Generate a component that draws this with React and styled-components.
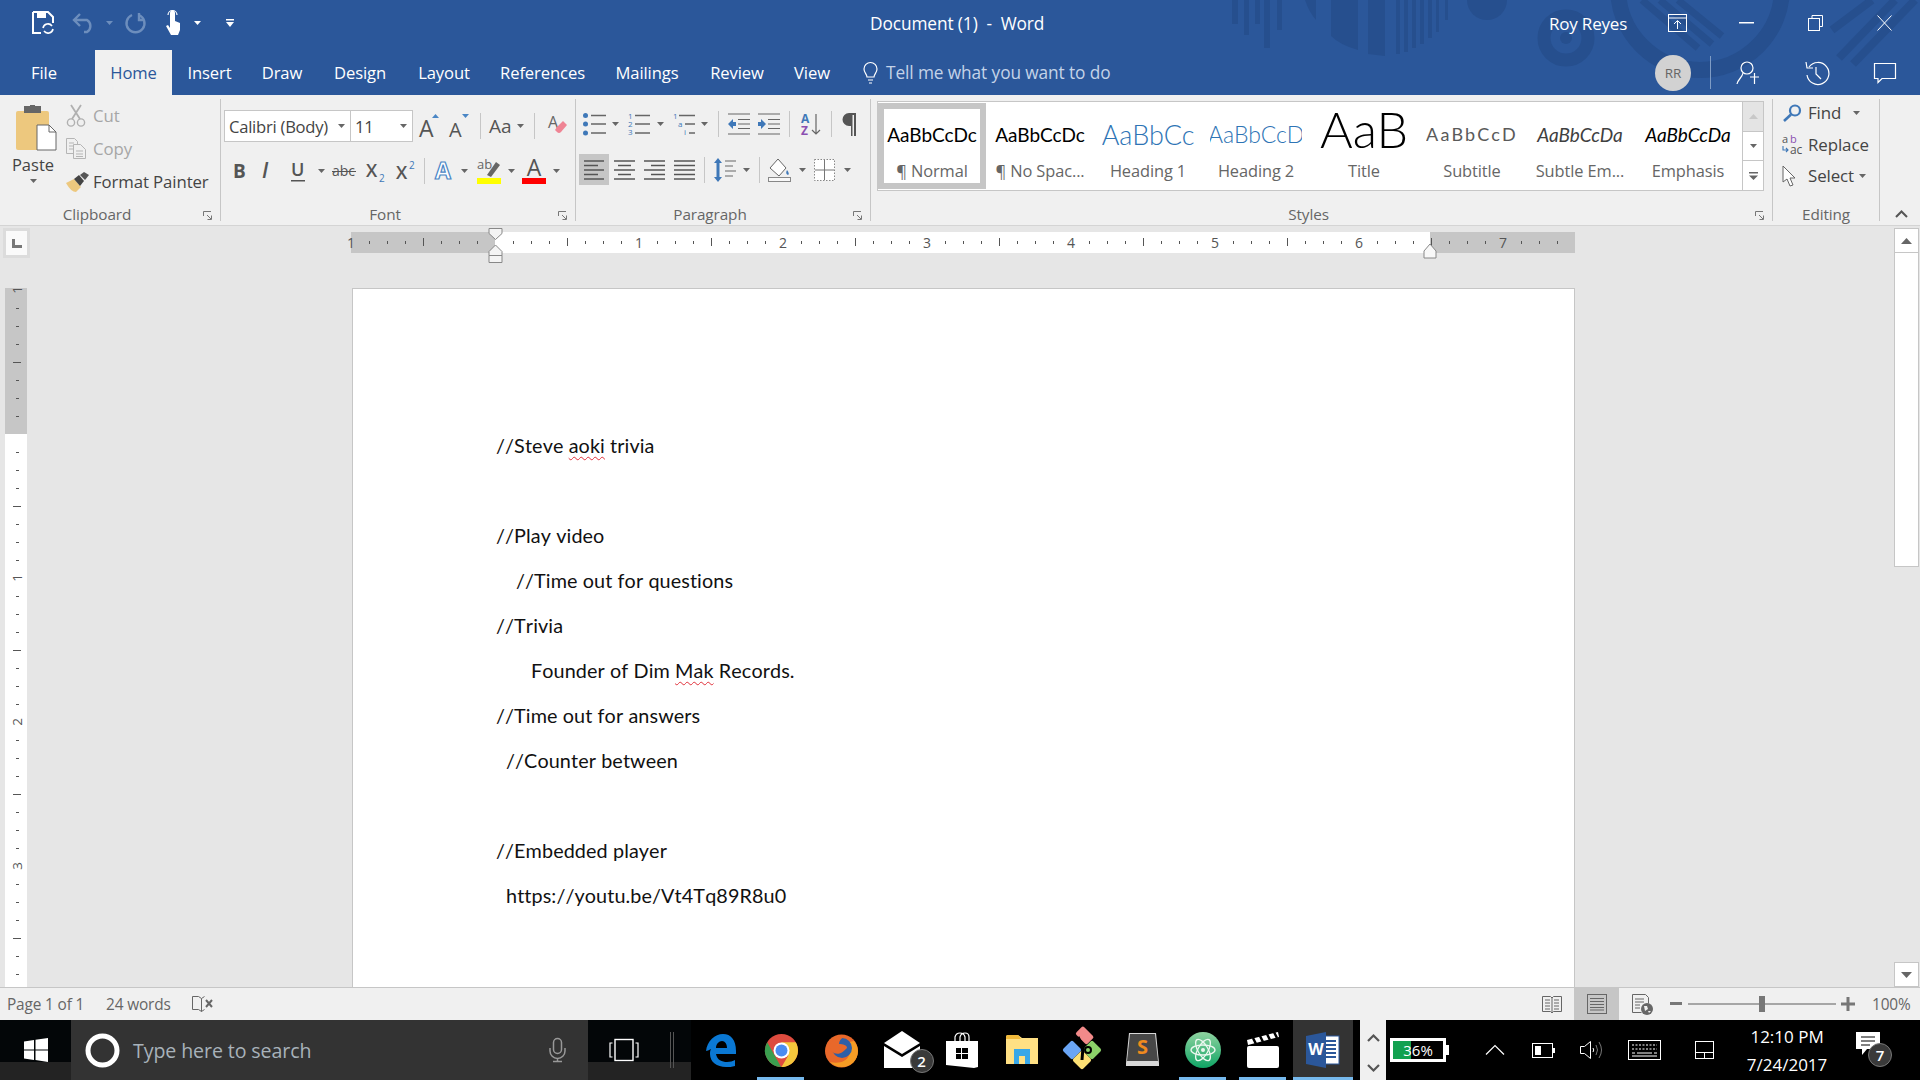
import React from "react";
import styled, { createGlobalStyle } from "styled-components";

const UI_FONT = `"Open Sans", "Noto Sans", sans-serif`;
const DOC_FONT = `Lato, "Open Sans", sans-serif`;
const BLUE = "#2b579a";
const GRAY = "#c6c6c6";
const ICON = "#5a5a5a";

const GlobalStyle = createGlobalStyle`
  html, body { margin: 0; padding: 0; background: #000; }
  body { font-family: ${UI_FONT}; overflow: hidden; }
`;

// Small svg wrapper, viewBox is always in real pixels so the drawings are easy to tune
const Glyph = styled.svg`
  display: block;
  flex: none;
  overflow: visible;
  margin-left: ${(p) => p.$ml || 0}px;
`;
const G = ({ w, h, ml, children }) => (
  <Glyph width={w} height={h} viewBox={`0 0 ${w} ${h}`} $ml={ml}>
    {children}
  </Glyph>
);
const Caret = ({ ml, color = "#666" }) => (
  <G w={7} h={4} ml={ml}>
    <polygon points="0,0 7,0 3.5,4" fill={color} />
  </G>
);

/* ---------- Header ---------- */
const Window = styled.div`
  width: 1920px;
  height: 1080px;
  display: flex;
  flex-direction: column;
  overflow: hidden;
  background: #e6e6e6;
`;
const Header = styled.header`
  position: relative;
  height: 95px;
  flex: none;
  background: ${BLUE};
  color: #fff;
`;
const Art = styled.svg`
  position: absolute;
  left: 0;
  top: 0;
`;
const TitleRow = styled.div`
  position: relative;
  display: flex;
  align-items: center;
  height: 46px;
  padding-right: 28px;
`;
const Qat = styled.div`
  display: flex;
  align-items: center;
  width: 870px;
  padding-left: 32px;
  box-sizing: border-box;
  flex: none;
`;
const DocTitle = styled.div`
  font-size: 17.3px;
  white-space: pre;
  letter-spacing: -0.1px;
  color: #fff;
`;
const UserName = styled.div`
  margin-left: auto;
  width: 79px;
  font-size: 17px;
  letter-spacing: -0.2px;
  white-space: nowrap;
`;
const TabRow = styled.nav`
  position: relative;
  display: flex;
  height: 45px;
  margin-top: 4px;
  padding-right: 24px;
`;
const Tab = styled.div`
  width: ${(p) => p.$w}px;
  margin-right: ${(p) => p.$mr || 0}px;
  display: flex;
  align-items: center;
  justify-content: center;
  font-size: 16.6px;
  letter-spacing: -0.1px;
  background: ${(p) => (p.$active ? "#f0f0f0" : "transparent")};
  color: ${(p) => (p.$active ? BLUE : "#fff")};
`;
const TellMe = styled.div`
  display: flex;
  align-items: center;
  margin-left: 18px;
  gap: 6px;
  font-size: 17.3px;
  letter-spacing: -0.1px;
  color: #c4d3e8;
`;
const UserTools = styled.div`
  margin-left: auto;
  display: flex;
  align-items: center;
`;
const Avatar = styled.div`
  width: 36px;
  height: 36px;
  border-radius: 50%;
  background: #d2d2d2;
  color: #666;
  font-size: 13.5px;
  display: flex;
  align-items: center;
  justify-content: center;
`;
const HeaderRule = styled.div`
  width: 1px;
  height: 33px;
  margin-left: 19px;
  background: #7f9cc5;
`;

/* ---------- Ribbon ---------- */
const Ribbon = styled.section`
  display: flex;
  flex: none;
  height: 130px;
  background: #f0f0f0;
  border-bottom: 1px solid #d4d4d4;
`;
const Group = styled.div`
  position: relative;
  width: ${(p) => p.$w}px;
  height: 122px;
  margin-top: 4px;
  flex: none;
  box-sizing: border-box;
  border-right: 1px solid ${GRAY};
`;
const GroupBody = styled.div`
  height: 104px;
  display: flex;
  flex-direction: ${(p) => (p.$row ? "row" : "column")};
`;
const GroupLabel = styled.div`
  height: 22px;
  line-height: 22px;
  text-align: center;
  font-size: 15.3px;
  letter-spacing: -0.1px;
  color: #666;
  padding-right: ${(p) => p.$pr || 0}px;
`;
const Launcher = styled.div`
  position: absolute;
  right: 8px;
  bottom: 1px;
`;
const LauncherIcon = () => (
  <Launcher>
    <G w={9} h={9}>
      <path d="M.5 5V.5H8M4 4l4 4M8.5 4.5v4H4.5" stroke="#777" fill="none" />
    </G>
  </Launcher>
);
const PasteButton = styled.div`
  width: 66px;
  flex: none;
  display: flex;
  flex-direction: column;
  align-items: center;
  padding-top: 6px;
  font-size: 16.5px;
  color: #444;
  gap: 3px;
`;
const PasteArt = styled.span`
  margin-left: 6px;
`;
const ClipList = styled.div`
  display: flex;
  flex-direction: column;
`;
const ClipRow = styled.div`
  height: 33px;
  display: flex;
  align-items: center;
  font-size: 16.8px;
  letter-spacing: -0.1px;
  color: ${(p) => (p.$disabled ? "#a6a6a6" : "#444")};
`;
const ClipIcon = styled.span`
  width: 27px;
  flex: none;
`;
const ToolRow = styled.div`
  height: ${(p) => p.$h}px;
  flex: none;
  display: flex;
  align-items: center;
  padding-left: ${(p) => p.$pl}px;
  margin-top: ${(p) => p.$mt}px;
`;
const Divider = styled.div`
  flex: none;
  width: 1px;
  height: 26px;
  margin-left: ${(p) => p.$ml}px;
  background: ${GRAY};
`;
const Combo = styled.div`
  display: flex;
  width: 189px;
  height: 32px;
  flex: none;
  box-sizing: border-box;
  background: #fff;
  border: 1px solid ${GRAY};
`;
const ComboField = styled.div`
  width: ${(p) => p.$w}px;
  box-sizing: border-box;
  display: flex;
  align-items: center;
  justify-content: space-between;
  padding: 0 5px 0 4px;
  font-size: 16.6px;
  letter-spacing: -0.25px;
  color: #444;
  border-right: ${(p) => (p.$divided ? `1px solid ${GRAY}` : "none")};
  white-space: nowrap;
`;
const ActiveTool = styled.div`
  width: 30px;
  height: 31px;
  flex: none;
  display: flex;
  align-items: center;
  justify-content: center;
  background: ${GRAY};
`;
const Gallery = styled.div`
  display: flex;
  margin: 2px 0 0 6px;
  height: 90px;
  box-sizing: border-box;
  border: 1px solid ${GRAY};
  background: #fff;
`;
const StyleCard = styled.div`
  width: 108px;
  height: 86px;
  margin-top: 1px;
  flex: none;
  box-sizing: border-box;
  border: 6px solid ${(p) => (p.$selected ? GRAY : "transparent")};
  display: flex;
  flex-direction: column;
  align-items: center;
`;
const StyleSample = styled.div`
  width: 92px;
  height: 50px;
  flex: none;
  box-sizing: border-box;
  padding-bottom: ${(p) => p.$lift || 0}px;
  overflow: hidden;
  display: flex;
  align-items: center;
  justify-content: center;
  white-space: nowrap;
  font-family: ${DOC_FONT};
  font-size: ${(p) => p.$size}px;
  font-weight: ${(p) => p.$weight || 400};
  font-style: ${(p) => (p.$italic ? "italic" : "normal")};
  letter-spacing: ${(p) => p.$track || 0}px;
  color: ${(p) => p.$color || "#000"};
`;
const StyleName = styled.div`
  font-size: 16.4px;
  letter-spacing: -0.1px;
  color: #666;
  line-height: 24px;
  white-space: nowrap;
`;
const GalleryArrows = styled.div`
  width: 22px;
  flex: none;
  display: flex;
  flex-direction: column;
  margin: 2px 0 0 -1px;
  height: 90px;
  box-sizing: border-box;
`;
const GalleryArrow = styled.div`
  flex: 1;
  display: flex;
  align-items: center;
  justify-content: center;
  box-sizing: border-box;
  background: ${(p) => (p.$disabled ? "#e4e4e4" : "#fff")};
  border: 1px solid ${GRAY};
  border-top-width: ${(p) => (p.$first ? 1 : 0)}px;
`;
const EditRow = styled.div`
  height: 31.5px;
  display: flex;
  align-items: center;
  padding-left: 9px;
  font-size: 16.9px;
  letter-spacing: -0.1px;
  color: #444;
`;
const EditIcon = styled.span`
  width: 26px;
  flex: none;
`;
const EditList = styled.div`
  margin-top: -2px;
`;
const Collapse = styled.div`
  align-self: flex-end;
  margin: 0 0 7px 15px;
`;

/* ---------- Workspace ---------- */
const Workspace = styled.main`
  flex: 1;
  min-height: 0;
  display: flex;
  background: #e6e6e6;
`;
const DocArea = styled.div`
  width: 1894px;
  flex: none;
  display: flex;
  flex-direction: column;
`;
const RulerRow = styled.div`
  height: 62px;
  flex: none;
  box-sizing: border-box;
  padding-top: 2px;
  display: flex;
  align-items: flex-start;
`;
const TabStop = styled.div`
  width: 27px;
  height: 30px;
  margin: 0 321px 0 3px;
  flex: none;
  background: #fafafa;
  border: 3px solid #dcdcdc;
  box-sizing: border-box;
  display: flex;
  align-items: center;
  justify-content: center;
`;
const PageRow = styled.div`
  flex: 1;
  min-height: 0;
  display: flex;
  align-items: flex-start;
`;
const Page = styled.article`
  width: 1223px;
  height: 700px;
  margin-left: 325px;
  flex: none;
  box-sizing: border-box;
  background: #fff;
  border: 1px solid ${GRAY};
  border-bottom: none;
  padding: 134px 0 0 143px;
  font-family: ${DOC_FONT};
  font-size: 19.8px;
  letter-spacing: 0.1px;
  font-kerning: none;
  color: #111;
  overflow: hidden;
`;
const Line = styled.p`
  margin: 0;
  height: 45px;
  line-height: 45px;
  padding-left: ${(p) => p.$indent || 0}px;
  white-space: pre;
`;
const Typo = styled.span`
  text-decoration: underline wavy #e0303a 1px;
  text-underline-offset: 3px;
`;
const ScrollBar = styled.aside`
  width: 25px;
  flex: none;
  display: flex;
  flex-direction: column;
  padding-top: 2px;
`;
const ScrollButton = styled.div`
  height: 25px;
  flex: none;
  background: #fff;
  border: 1px solid ${GRAY};
  box-sizing: border-box;
  display: flex;
  align-items: center;
  justify-content: center;
`;
const ScrollThumb = styled.div`
  height: 314px;
  flex: none;
  background: #fff;
  border: 1px solid ${GRAY};
  border-top: none;
  box-sizing: border-box;
`;
const ScrollTrack = styled.div`
  flex: 1;
`;

/* ---------- Status bar ---------- */
const StatusBar = styled.footer`
  height: 33px;
  flex: none;
  box-sizing: border-box;
  display: flex;
  align-items: center;
  background: #f0f0f0;
  border-top: 1px solid ${GRAY};
  font-size: 15.4px;
  letter-spacing: -0.15px;
  color: #666;
`;
const StatusText = styled.span`
  margin-left: ${(p) => p.$ml}px;
  width: ${(p) => p.$w}px;
  white-space: nowrap;
  flex: none;
`;
const ViewButton = styled.div`
  width: 45px;
  height: 32px;
  margin-left: ${(p) => p.$ml || 0}px;
  flex: none;
  display: flex;
  align-items: center;
  justify-content: center;
  background: ${(p) => (p.$active ? GRAY : "transparent")};
`;

/* ---------- Taskbar ---------- */
const Taskbar = styled.div`
  height: 60px;
  flex: none;
  display: flex;
  background: #000;
  color: #fff;
`;
const DimSegment = styled.div`
  width: ${(p) => p.$w}px;
  flex: none;
  display: flex;
  align-items: center;
  box-sizing: border-box;
  padding-left: ${(p) => p.$pl || 0}px;
  background: linear-gradient(#030608 70%, #232323 70%);
`;
const SearchBox = styled.div`
  width: 517px;
  flex: none;
  box-sizing: border-box;
  background: #333;
  display: flex;
  align-items: center;
  padding-left: 14px;
  font-size: 19.6px;
  letter-spacing: -0.1px;
  color: #a8b2ba;
`;
const SearchText = styled.span`
  margin-left: 13px;
  width: 416px;
`;
const TaskSlot = styled.div`
  position: relative;
  width: 60.2px;
  flex: none;
  display: flex;
  align-items: center;
  justify-content: center;
  background: ${(p) => (p.$active ? "#333" : "transparent")};
  &::after {
    content: "";
    display: ${(p) => (p.$running ? "block" : "none")};
    position: absolute;
    left: ${(p) => (p.$active ? 0 : 6)}px;
    right: ${(p) => (p.$active ? 0 : 7)}px;
    bottom: 0;
    height: 3px;
    background: #76b9ed;
  }
`;
const TaskBadge = styled.div`
  position: absolute;
  left: 38px;
  top: 29px;
  width: 24px;
  height: 24px;
  border-radius: 50%;
  background: #3a3a3a;
  border: 1px solid #777;
  box-sizing: border-box;
  display: flex;
  align-items: center;
  justify-content: center;
  font-size: 15px;
  font-weight: 600;
  color: #fff;
`;
const OverflowStrip = styled.div`
  width: 26px;
  margin-left: 7px;
  flex: none;
  background: #f0f0f0;
  display: flex;
  flex-direction: column;
  align-items: center;
  justify-content: space-between;
  padding: 14px 0 8px;
  box-sizing: border-box;
`;
const Tray = styled.div`
  display: flex;
  flex: 1;
  align-items: center;
  padding-left: 4px;
`;
const BatteryMeter = styled.div`
  position: relative;
  width: 56px;
  height: 24px;
  flex: none;
  box-sizing: border-box;
  border: 3px solid #fff;
  background: #000;
  display: flex;
  align-items: center;
  justify-content: center;
  font-size: 15px;
  color: #fff;
  &::before {
    content: "";
    position: absolute;
    inset: 0 auto 0 0;
    width: 36%;
    background: #12a150;
  }
  &::after {
    content: "";
    position: absolute;
    right: -6px;
    top: 4px;
    width: 3px;
    height: 10px;
    background: #fff;
  }
`;
const BatteryText = styled.span`
  position: relative;
`;
const Clock = styled.div`
  width: 90px;
  margin-left: 28px;
  flex: none;
  display: flex;
  flex-direction: column;
  align-items: center;
  gap: 7px;
  font-size: 17px;
  line-height: 21px;
  white-space: nowrap;
`;
const NotifyArea = styled.div`
  position: relative;
  margin-left: 24px;
  width: 36px;
  height: 36px;
  flex: none;
`;
const NotifyBadge = styled(TaskBadge)`
  left: 12px;
  top: 11px;
`;

/* ---------- Small icon drawings ---------- */
const line = (d, color = ICON, w = 1.3) => <path d={d} stroke={color} strokeWidth={w} fill="none" />;

const lines = (ys, x1, x2) => ys.map((y) => `M${x1} ${y}H${x2}`).join("");
const AlignIcon = ({ ml, kind }) => {
  const rows = [1, 5.5, 10, 14.5, 19];
  const d = rows
    .map((y, i) => {
      const short = i % 2 === 1;
      if (kind === "left") return `M0 ${y}H${short ? 14 : 20}`;
      if (kind === "center") return `M${short ? 4 : 0} ${y}H${short ? 17 : 21}`;
      if (kind === "right") return `M${short ? 7 : 0} ${y}H21`;
      return `M0 ${y}H21`;
    })
    .join("");
  return (
    <G w={21} h={20} ml={ml}>
      {line(d, "#555", 1.4)}
    </G>
  );
};

const HeaderArt = () => (
  <Art width="1920" height="95" viewBox="0 0 1920 95">
    <g fill="#264f8e">
      <rect x="1232" width="6" height="24" />
      <rect x="1244" width="5" height="35" />
      <rect x="1255" width="5" height="24" />
      <rect x="1264" width="6" height="48" />
      <rect x="1277" width="5" height="30" />
      <path d="M1305 0h11v20q-7-8-11-20zM1331 0h27v50q-18-5-27-14zM1368 0h17v56l-17-2z" />
      <path d="M1396 0h4v54h-4zM1404 0h4v52h-4zM1412 0h4v48h-4zM1420 0h4v44h-4zM1428 0h4v38h-4zM1436 0h3v32h-3zM1445 0h3v20h-3z" />
      <circle cx="1487" cy="0" r="20" />
      <circle cx="1566" cy="38" r="6" />
    </g>
    <g fill="none" stroke="#264f8e">
      <circle cx="1566" cy="38" r="22" strokeWidth="13" />
      <circle cx="1700" cy="-12" r="82" strokeWidth="16" />
      <path d="M1642 0l56 48M1660 0l52 44M1678 0l44 36" strokeWidth="7" />
      <path d="M1872 0l-40 30M1895 0l-56 58M1915 0l-62 64" strokeWidth="8" />
    </g>
  </Art>
);

const Paste = () => (
  <G w={41} h={45}>
    <rect x="0" y="6" width="33" height="39" rx="2" fill="#edc87e" />
    <path d="M10 6V3h4V0h5v3h4v3z" fill="#666" />
    <rect x="8" y="1" width="17" height="7" fill="#666" />
    <path d="M21 20h12l7 7v18H21z" fill="#fff" stroke="#666" />
    <path d="M33 20v7h7" fill="none" stroke="#666" />
  </G>
);
const Scissors = () => (
  <G w={20} h={22}>
    {line("M5 0l9 14M15 0L6 14", "#b0b0b0", 1.8)}
    <circle cx="5" cy="17.5" r="3.6" fill="none" stroke="#b0b0b0" strokeWidth="1.4" />
    <circle cx="15" cy="17.5" r="3.6" fill="none" stroke="#b0b0b0" strokeWidth="1.4" />
  </G>
);
const CopyIcon = () => (
  <G w={20} h={21}>
    {line("M.5 .5h8l3 3v12H.5zM3 5h5M3 8h6M3 11h6", "#b5b5b5", 1)}
    <path d="M7.5 6.5h7l5 5v9h-12z" fill="#f0f0f0" stroke="#b5b5b5" />
    {line("M10 13h7M10 16h7M10 18.5h7", "#b5b5b5", 1)}
  </G>
);
const Brush = () => (
  <G w={23} h={20}>
    <path d="M0 11l8-4 7 8-5 5q-5 0-10-9z" fill="#edc87e" />
    <path d="M8 7l5-4 5 6-4 5z" fill="#444" />
    <path d="M14 3l4-3 5 3-4 5z" fill="#555" />
  </G>
);
const GrowA = ({ ml, grow }) => (
  <G w={20} h={24} ml={ml}>
    <text x="0" y="23" fontFamily={UI_FONT} fontSize={grow ? 23 : 20} fill="#555">A</text>
    <polygon points={grow ? "13,4 20,4 16.5,0" : "13,0 20,0 16.5,4"} fill="#4a86c5" />
  </G>
);
const ClearFormat = ({ ml }) => (
  <G w={19} h={24} ml={ml}>
    <text x="0" y="14" fontFamily={UI_FONT} fontSize="16" fill="#666">A</text>
    <path d="M9 13l6-6 4 4-6 7q-2 2-4 0l-2-2z" fill="#ef8494" />
  </G>
);
const Bullets = ({ ml }) => (
  <G w={23} h={22} ml={ml}>
    <g fill="#3f78b8"><circle cx="2.5" cy="2.5" r="2.5" /><circle cx="2.5" cy="11" r="2.5" /><circle cx="2.5" cy="20" r="2.5" /></g>
    {line("M8 2.5h15M8 11h15M8 20h15", "#666", 1.3)}
  </G>
);
const Numbering = ({ ml }) => (
  <G w={22} h={22} ml={ml}>
    <g fontFamily={UI_FONT} fontSize="8" fill="#3f78b8"><text x="0" y="6">1</text><text x="0" y="14">2</text><text x="0" y="22">3</text></g>
    {line("M7 2.5h15M7 11h15M7 20h15", "#666", 1.3)}
  </G>
);
const Multilevel = ({ ml }) => (
  <G w={22} h={22} ml={ml}>
    <g fontFamily={UI_FONT} fontSize="8" fill="#3f78b8"><text x="0" y="6">1</text><text x="5" y="14">a</text><text x="11" y="22">i</text></g>
    {line("M6 2.5h16M12 11h10M16 20h6", "#666", 1.3)}
  </G>
);
const IndentIcon = ({ ml, dir }) => (
  <G w={22} h={22} ml={ml}>
    {line("M0 1h22M10 6.5h12M10 11h12M10 15.5h12M0 21h22", "#666", 1.2)}
    <polygon points={dir ? "8,11 3,6 3,9 0,9 0,13 3,13 3,16" : "0,11 5,6 5,9 8,9 8,13 5,13 5,16"} fill="#3f78b8" />
  </G>
);
const SortIcon = ({ ml }) => (
  <G w={20} h={24} ml={ml}>
    <text x="0" y="11" fontFamily={UI_FONT} fontWeight="700" fontSize="12" fill="#3f78b8">A</text>
    <text x="0" y="23" fontFamily={UI_FONT} fontWeight="700" fontSize="12" fill="#8a4fb0">Z</text>
    {line("M15 2v20M11 18l4 4 4-4", "#666", 1.2)}
  </G>
);
const Pilcrow = ({ ml }) => (
  <G w={16} h={24} ml={ml}>
    <path d="M14 1H7a6 6 0 0 0 0 13h2v10h1.5V3H12v21h2z" fill="#555" />
  </G>
);
const SpacingIcon = ({ ml }) => (
  <G w={22} h={24} ml={ml}>
    <path d="M4 0l4 5H5.5v14H8l-4 5-4-5h2.5V5H0z" fill="#3f78b8" />
    {line("M11 3h11M11 8h8M11 13h11M11 18h8", "#666", 1.2)}
  </G>
);
const Shading = ({ ml }) => (
  <G w={24} h={24} ml={ml}>
    <path d="M10 1l8 9-7 8-9-8z" fill="#fff" stroke="#666" />
    <path d="M19 12q3 4 1 5-3-1-1-5z" fill="#3f78b8" />
    <rect x=".5" y="19.5" width="22" height="4" fill="#f8f8f8" stroke="#888" />
  </G>
);
const Borders = ({ ml }) => (
  <G w={21} h={22} ml={ml}>
    <rect x=".5" y=".5" width="20" height="21" fill="#fff" stroke="#888" strokeDasharray="1.5 1.5" />
    {line("M10.5 1v20M1 11h19", "#777", 1)}
  </G>
);
const Magnifier = () => (
  <G w={20} h={18}>
    <circle cx="13" cy="6.5" r="5" fill="none" stroke="#3f78b8" strokeWidth="2.2" />
    {line("M9 10.5L2 17", "#3f78b8", 2.6)}
  </G>
);
const ReplaceIcon = () => (
  <G w={23} h={20}>
    <text x="0" y="9" fontFamily={UI_FONT} fontSize="11" fill="#555">a</text>
    <text x="8" y="9" fontFamily={UI_FONT} fontSize="11" fill="#8a4fb0">b</text>
    <text x="8" y="20" fontFamily={UI_FONT} fontSize="12" fill="#555">ac</text>
    {line("M1 12v4h5M4 14l2 2-2 2", "#3f78b8", 1.1)}
  </G>
);
const Pointer = () => (
  <G w={14} h={22}>
    <path d="M1 1v16l4-3 3 7 3-1-3-7h5z" fill="#fff" stroke="#666" />
  </G>
);

const EdgeLogo = () => (
  <G w={30} h={33}>
    <path d="M0 17C1 7 9 0 17 0c8 0 13 6 13 17v3H10c1 6 6 8 11 8 3 0 6-1 8-2v6c-3 1-6 1-9 1-9 0-16-5-16-13 0-2 0-3 1-5-2 1-4 2-5 2zM10 14h11c0-4-2-7-5-7-3 0-6 3-6 7z" fill="#0a78d4" />
  </G>
);
const ChromeLogo = () => (
  <G w={33} h={33}>
    <circle cx="16.5" cy="16.5" r="16.5" fill="#dd4b3e" />
    <path d="M16.5 33A16.5 16.5 0 0 1 2.2 8.2L10 22l6 11z" fill="#3a9e4f" />
    <path d="M16.5 33a16.5 16.5 0 0 0 14.3-24.7H16.5L23 22z" fill="#f4c73c" />
    <circle cx="16.5" cy="16.5" r="8" fill="#fff" />
    <circle cx="16.5" cy="16.5" r="6" fill="#4a8cf0" />
  </G>
);
const FirefoxLogo = () => (
  <G w={33} h={35}>
    <circle cx="16.5" cy="18" r="16.5" fill="#e8682a" />
    <path d="M29 8a16 16 0 0 1 4 10c0 9-7 16-16 16-5 0-9-2-12-5 8 2 17 0 19-7 2-6-1-10-4-12z" fill="#f7a224" opacity="0.9" />
    <ellipse cx="17" cy="15" rx="10" ry="10" fill="#2d5fa8" />
    <path d="M5 12c3-6 9-10 15-9-4 2-6 5-6 8 4 0 8 1 8 4-4 4-9 9-16 3-1-2-2-4-1-6z" fill="#e8682a" />
  </G>
);
const MailIcon = () => (
  <G w={36} h={38}>
    <path d="M0 12L18 0l18 12-18 11z" fill="#fff" />
    <path d="M0 15l18 11 18-11v22H0z" fill="#fff" />
  </G>
);
const StoreIcon = () => (
  <G w={32} h={36}>
    <path d="M9 10V5q1-4 5-4t5 4v5M14 10V5q1-4 5-4t4 4v5" fill="none" stroke="#fff" strokeWidth="1.2" />
    <path d="M0 9l32 0v26l-4 1L0 33z" fill="#fff" />
    <path d="M10 16h5v5h-5zM16 16h6v5h-6zM10 22h5v5h-5zM16 22h6v5h-6z" fill="#000" />
  </G>
);
const FolderIcon = () => (
  <G w={32} h={34}>
    <path d="M0 4q0-2 2-2h10l4 3h16v26H0z" fill="#ffe084" />
    <path d="M0 4q0-2 2-2h10l3 4H0z" fill="#f0b93a" />
    <path d="M8 31V16h16v15h-5v-8h-6v8z" fill="#38a7e8" />
  </G>
);
const KrakenIcon = () => (
  <G w={36} h={46}>
    <rect x="13" y="3" width="16" height="11" rx="2" transform="rotate(45 21 8)" fill="#f28a8a" />
    <rect x="1" y="16" width="14" height="14" rx="2" transform="rotate(45 8 23)" fill="#6aa5f5" />
    <rect x="21" y="16" width="14" height="14" rx="2" transform="rotate(45 28 23)" fill="#8bd168" />
    <rect x="11" y="26" width="14" height="14" rx="2" transform="rotate(45 18 33)" fill="#fde074" />
    {line("M14 10l5 10-1 13", "#000", 3)}
    <circle cx="24" cy="23" r="3" fill="none" stroke="#000" strokeWidth="2" />
  </G>
);
const SublimeIcon = () => (
  <G w={33} h={36}>
    <path d="M3 1h27l3 30v3H0v-3z" fill="#d8d8d8" />
    <path d="M4 2h25l3 27H1z" fill="#474747" />
    <text x="16.5" y="22" textAnchor="middle" fontFamily={UI_FONT} fontWeight="700" fontSize="20" fill="#f08a1e">S</text>
  </G>
);
const AtomIcon = () => (
  <G w={36} h={36}>
    <defs>
      <linearGradient id="atomFill" x1="0" y1="0" x2="0" y2="1">
        <stop offset="0" stopColor="#8fd3a0" />
        <stop offset="1" stopColor="#0fa565" />
      </linearGradient>
    </defs>
    <circle cx="18" cy="18" r="18" fill="url(#atomFill)" />
    <g fill="none" stroke="#eaf7ef" strokeWidth="1.3">
      <ellipse cx="18" cy="18" rx="12" ry="5" />
      <ellipse cx="18" cy="18" rx="12" ry="5" transform="rotate(60 18 18)" />
      <ellipse cx="18" cy="18" rx="12" ry="5" transform="rotate(120 18 18)" />
    </g>
    <circle cx="18" cy="18" r="2" fill="#eaf7ef" />
  </G>
);
const ClapperIcon = () => (
  <G w={32} h={36}>
    <path d="M0 8L31 0l1 5L1 13z" fill="#fff" />
    <path d="M6 6l3 6M13 4l3 6M20 2l3 6M27 0l3 6" stroke="#000" strokeWidth="2.5" />
    <rect x="0" y="14" width="32" height="22" rx="2" fill="#fff" />
  </G>
);
const WordIcon = () => (
  <G w={33} h={36}>
    <rect x="14" y="4" width="19" height="28" fill="#fff" stroke="#2b579a" />
    {line("M17 9h13M17 13h13M17 17h13M17 21h13M17 25h13", "#2b579a", 1.8)}
    <path d="M0 4l20-4v36L0 32z" fill="#2b579a" />
    <text x="10" y="23" textAnchor="middle" fontFamily={UI_FONT} fontWeight="700" fontSize="16" fill="#fff">W</text>
  </G>
);

/* ---------- Rulers ---------- */
const rulerInches = ["1", null, "1", "2", "3", "4", "5", "6", "7"];
const TopRuler = () => {
  const ticks = [];
  for (let x = 0; x < 1224; x += 18) {
    if (x % 144 === 0) continue;
    const half = x % 72 === 0;
    ticks.push(<rect key={x} x={x} y={half ? 10 : 13} width="1" height={half ? 8 : 3} fill="#555" />);
  }
  return (
    <G w={1225} h={36}>
      <rect x="0" y="4" width="1224" height="21" fill={GRAY} />
      <rect x="144" y="4" width="935" height="21" fill="#fff" />
      {ticks}
      {rulerInches.map((n, i) =>
        n ? (
          <text key={i} x={i * 144} y="20" textAnchor="middle" fontFamily={UI_FONT} fontSize="14" fill="#555">
            {n}
          </text>
        ) : null
      )}
      <path d="M138 .5h13v5l-6.5 6-6.5-6zM138 23.5l6.5-6.5 6.5 6.5v4h-13zM138 27.5h13v7h-13z" fill="#f4f4f4" stroke="#888" />
      <path d="M1073 23l6-7 6 7v7h-12z" fill="#f8f8f8" stroke="#888" />
    </G>
  );
};
const SideRuler = () => {
  const ticks = [];
  for (let k = -7; k <= 30; k++) {
    if (k % 8 === 0) continue;
    const half = k % 4 === 0;
    ticks.push(<rect key={k} x={half ? 8 : 11} y={146 + k * 18} width={half ? 8 : 3} height="1" fill="#555" />);
  }
  return (
    <G w={22} h={700} ml={5}>
      <rect width="22" height="146" fill={GRAY} />
      <rect y="146" width="22" height="554" fill="#fff" />
      {ticks}
      {[2, 290, 434, 578].map((y, i) => (
        <text key={y} transform={`translate(17 ${y}) rotate(-90)`} textAnchor="middle" fontFamily={UI_FONT} fontSize="13.5" fill="#555">
          {i === 0 ? 1 : i}
        </text>
      ))}
    </G>
  );
};

const TABS = [
  ["File", 88, false, 7],
  ["Home", 77, true],
  ["Insert", 75],
  ["Draw", 70],
  ["Design", 86],
  ["Layout", 82],
  ["References", 115],
  ["Mailings", 94],
  ["Review", 86],
  ["View", 64],
];

const STYLES = [
  { name: "¶ Normal", sample: "AaBbCcDc", size: 19, selected: true },
  { name: "¶ No Spac...", sample: "AaBbCcDc", size: 19 },
  { name: "Heading 1", sample: "AaBbCc", size: 27, weight: 300, color: "#2e74b5" },
  { name: "Heading 2", sample: "AaBbCcD", size: 23, weight: 300, color: "#2e74b5" },
  { name: "Title", sample: "AaB", size: 50, weight: 300, lift: 10 },
  { name: "Subtitle", sample: "AaBbCcD", size: 18, track: 2.2, color: "#5a5a5a" },
  { name: "Subtle Em...", sample: "AaBbCcDa", size: 19, italic: true, color: "#404040" },
  { name: "Emphasis", sample: "AaBbCcDa", size: 19, italic: true },
];

const App = () => (
  <Window>
    <GlobalStyle />
    <Header>
      <HeaderArt />
      <TitleRow>
        <Qat>
          <G w={22} h={24}>
            <path d="M1 1h15l5 5v6M1 1v21h8" fill="none" stroke="#fff" strokeWidth="2" />
            <path d="M5 1h9v6H5z" fill="#fff" />
            {line("M11 17a5 5 0 0 1 9-2M21 18a5 5 0 0 1-9 2", "#fff", 1.6)}
          </G>
          <G w={23} h={20} ml={19}>
            {line("M7 1L1 7l6 6M1 7h13a7 7 0 0 1 0 12h-3", "#6d8ebd", 2.4)}
          </G>
          <Caret ml={10} color="#6d8ebd" />
          <G w={20} h={22} ml={12}>
            {line("M7 3a9 9 0 1 0 7 0M14 1v7h5", "#6d8ebd", 2.4)}
          </G>
          <G w={17} h={24} ml={20}>
            <path d="M5 2a2.5 2.5 0 0 1 5 0v8l5 2v7l-2 5H6L1 15l2-1 2 3z" fill="#fff" />
            {line("M3 4a4.5 4.5 0 0 1 9 0", "#fff", 1.2)}
          </G>
          <Caret ml={12} color="#fff" />
          <G w={8} h={8} ml={25}>
            <path d="M0 0h8v1.5H0zM0 3h8L4 8z" fill="#fff" />
          </G>
        </Qat>
        <DocTitle>Document (1)  -  Word</DocTitle>
        <UserName>Roy Reyes</UserName>
        <G w={19} h={18} ml={40}>
          <rect x=".5" y=".5" width="18" height="17" fill="none" stroke="#fff" />
          {line("M1 4h17M9.5 15V7M6 10l3.5-3.5L13 10", "#fff", 1)}
        </G>
        <G w={15} h={2} ml={52}>
          <rect width="15" height="1.5" fill="#fff" />
        </G>
        <G w={15} h={16} ml={54}>
          <rect x=".5" y="3.5" width="11" height="12" fill={BLUE} stroke="#fff" />
          {line("M4 3V.5h10.5v11H12", "#fff", 1)}
        </G>
        <G w={15} h={16} ml={54}>
          {line("M.5 .5l14 15M14.5 .5L.5 15.5", "#fff", 1)}
        </G>
      </TitleRow>
      <TabRow>
        {TABS.map(([label, w, active, mr]) => (
          <Tab key={label} $w={w} $active={active} $mr={mr}>
            {label}
          </Tab>
        ))}
        <TellMe>
          <G w={18} h={22}>
            <path d="M5 15c0-3-3-4-3-8a6.5 6.5 0 0 1 13 0c0 4-3 5-3 8zM6 18h5M7 21h3" fill="none" stroke="#fff" strokeWidth="1.2" />
          </G>
          Tell me what you want to do
        </TellMe>
        <UserTools>
          <Avatar>RR</Avatar>
          <HeaderRule />
          <G w={23} h={24} ml={25}>
            <circle cx="11" cy="7" r="6" fill="none" stroke="#fff" strokeWidth="1.2" />
            {line("M7 12c-1 5-5 6-6 11M14 16h9M18.5 12v11", "#fff", 1.2)}
          </G>
          <G w={23} h={24} ml={46}>
            {line("M4 6A11 11 0 1 1 2 14M1 1l1 6h6M11 6v7l5 5", "#fff", 1.2)}
          </G>
          <G w={22} h={20} ml={46}>
            <path d="M.5 .5h21v15H8l-4 4v-4H.5z" fill="none" stroke="#fff" strokeWidth="1.2" />
          </G>
        </UserTools>
      </TabRow>
    </Header>

    <Ribbon>
      <Group $w={221}>
        <GroupBody $row>
          <PasteButton>
            <PasteArt><Paste /></PasteArt>
            Paste
            <Caret />
          </PasteButton>
          <ClipList>
            <ClipRow $disabled>
              <ClipIcon><Scissors /></ClipIcon>Cut
            </ClipRow>
            <ClipRow $disabled>
              <ClipIcon><CopyIcon /></ClipIcon>Copy
            </ClipRow>
            <ClipRow>
              <ClipIcon><Brush /></ClipIcon>Format Painter
            </ClipRow>
          </ClipList>
        </GroupBody>
        <GroupLabel $pr={26}>Clipboard</GroupLabel>
        <LauncherIcon />
      </Group>

      <Group $w={355}>
        <GroupBody>
          <ToolRow $h={32} $pl={3} $mt={11}>
            <Combo>
              <ComboField $w={126} $divided>
                Calibri (Body)
                <Caret />
              </ComboField>
              <ComboField $w={61}>
                11
                <Caret />
              </ComboField>
            </Combo>
            <GrowA ml={6} grow />
            <GrowA ml={10} />
            <Divider $ml={11} />
            <G w={23} h={20} ml={8}>
              <text x="0" y="17" fontFamily={UI_FONT} fontSize="19" fill="#555">Aa</text>
            </G>
            <Caret ml={5} />
            <Divider $ml={10} />
            <ClearFormat ml={13} />
          </ToolRow>
          <ToolRow $h={31} $pl={12} $mt={13}>
            <G w={12} h={20}>
              <text x="0" y="17" fontFamily={UI_FONT} fontWeight="700" fontSize="19" fill="#555">B</text>
            </G>
            <G w={13} h={20} ml={16}>
              <text x="1" y="17" fontFamily={UI_FONT} fontStyle="italic" fontWeight="600" fontSize="21" fill="#555">I</text>
            </G>
            <G w={14} h={22} ml={17}>
              <text x="0" y="16" fontFamily={UI_FONT} fontSize="18" fontWeight="600" fill="#555">U</text>
              <rect y="20" width="14" height="1.5" fill="#555" />
            </G>
            <Caret ml={13} />
            <G w={24} h={20} ml={7}>
              <text x="0" y="15" fontFamily={UI_FONT} fontSize="14" fill="#555">abc</text>
              <rect y="10" width="24" height="1" fill="#555" />
            </G>
            <G w={19} h={22} ml={10}>
              <text x="0" y="17" fontFamily={UI_FONT} fontWeight="600" fontSize="18" fill="#555">X</text>
              <text x="13" y="22" fontFamily={UI_FONT} fontSize="10" fill="#3f78b8">2</text>
            </G>
            <G w={19} h={22} ml={11}>
              <text x="0" y="19" fontFamily={UI_FONT} fontWeight="600" fontSize="18" fill="#555">X</text>
              <text x="13" y="9" fontFamily={UI_FONT} fontSize="10" fill="#3f78b8">2</text>
            </G>
            <Divider $ml={9} />
            <G w={19} h={24} ml={10}>
              <text x="0" y="20" fontFamily={UI_FONT} fontWeight="700" fontSize="23" fill="#fff" stroke="#4a86c5" strokeWidth="1.2">A</text>
            </G>
            <Caret ml={7} />
            <G w={24} h={26} ml={9}>
              <text x="0" y="11" fontFamily={UI_FONT} fontSize="13" fill="#666">ab</text>
              <path d="M10 17l9-13 4 3-9 12z" fill="#666" />
              <rect y="20" width="24" height="6" fill="#ffff00" />
            </G>
            <Caret ml={7} />
            <G w={24} h={26} ml={7}>
              <text x="12" y="18" textAnchor="middle" fontFamily={UI_FONT} fontSize="23" fill="#555">A</text>
              <rect y="20" width="24" height="6" fill="#ff0000" />
            </G>
            <Caret ml={7} />
          </ToolRow>
        </GroupBody>
        <GroupLabel $pr={26}>Font</GroupLabel>
        <LauncherIcon />
      </Group>

      <Group $w={295}>
        <GroupBody>
          <ToolRow $h={32} $pl={7} $mt={9}>
            <Bullets />
            <Caret ml={6} />
            <Numbering ml={9} />
            <Caret ml={7} />
            <Multilevel ml={9} />
            <Caret ml={6} />
            <Divider $ml={10} />
            <IndentIcon ml={9} />
            <IndentIcon ml={8} dir />
            <Divider $ml={9} />
            <SortIcon ml={11} />
            <Divider $ml={10} />
            <Pilcrow ml={10} />
          </ToolRow>
          <ToolRow $h={31} $pl={3} $mt={14}>
            <ActiveTool>
              <AlignIcon kind="left" />
            </ActiveTool>
            <AlignIcon kind="center" ml={5} />
            <AlignIcon kind="right" ml={9} />
            <AlignIcon kind="justify" ml={9} />
            <Divider $ml={9} />
            <SpacingIcon ml={9} />
            <Caret ml={7} />
            <Divider $ml={9} />
            <Shading ml={8} />
            <Caret ml={7} />
            <Borders ml={8} />
            <Caret ml={9} />
          </ToolRow>
        </GroupBody>
        <GroupLabel $pr={26}>Paragraph</GroupLabel>
        <LauncherIcon />
      </Group>

      <Group $w={902}>
        <GroupBody $row>
          <Gallery>
            {STYLES.map((s) => (
              <StyleCard key={s.name} $selected={s.selected}>
                <StyleSample $size={s.size} $weight={s.weight} $color={s.color} $italic={s.italic} $track={s.track} $lift={s.lift}>
                  {s.sample}
                </StyleSample>
                <StyleName>{s.name}</StyleName>
              </StyleCard>
            ))}
          </Gallery>
          <GalleryArrows>
            <GalleryArrow $first $disabled>
              <G w={9} h={5}><polygon points="0,5 9,5 4.5,0" fill="#c8c8c8" /></G>
            </GalleryArrow>
            <GalleryArrow>
              <Caret color="#666" />
            </GalleryArrow>
            <GalleryArrow>
              <G w={9} h={8}><path d="M0 0h9v1.5H0zM0 3.5h9L4.5 8z" fill="#666" /></G>
            </GalleryArrow>
          </GalleryArrows>
        </GroupBody>
        <GroupLabel $pr={26}>Styles</GroupLabel>
        <LauncherIcon />
      </Group>

      <Group $w={107}>
        <GroupBody>
          <EditList>
            <EditRow>
              <EditIcon><Magnifier /></EditIcon>Find
              <Caret ml={12} />
            </EditRow>
            <EditRow>
              <EditIcon><ReplaceIcon /></EditIcon>Replace
            </EditRow>
            <EditRow>
              <EditIcon><Pointer /></EditIcon>Select
              <Caret ml={5} />
            </EditRow>
          </EditList>
        </GroupBody>
        <GroupLabel>Editing</GroupLabel>
      </Group>
      <Collapse>
        <G w={13} h={8}>
          {line("M1 7l5.5-5.5L12 7", "#555", 2)}
        </G>
      </Collapse>
    </Ribbon>

    <Workspace>
      <DocArea>
        <RulerRow>
          <TabStop>
            <G w={10} h={9}>
              <path d="M0 0h3v6h7v3H0z" fill="#777" />
            </G>
          </TabStop>
          <TopRuler />
        </RulerRow>
        <PageRow>
          <SideRuler />
          <Page>
            <Line>
              //Steve <Typo>aoki</Typo> trivia
            </Line>
            <Line />
            <Line>//Play video</Line>
            <Line $indent={20}>//Time out for questions</Line>
            <Line>//Trivia</Line>
            <Line $indent={35}>
              Founder of Dim <Typo>Mak</Typo> Records.
            </Line>
            <Line>//Time out for answers</Line>
            <Line $indent={10}>//Counter between</Line>
            <Line />
            <Line>//Embedded player</Line>
            <Line $indent={10}>https://youtu.be/Vt4Tq89R8u0</Line>
          </Page>
        </PageRow>
      </DocArea>
      <ScrollBar>
        <ScrollButton>
          <G w={11} h={6}><polygon points="0,6 11,6 5.5,0" fill="#666" /></G>
        </ScrollButton>
        <ScrollThumb />
        <ScrollTrack />
        <ScrollButton>
          <G w={11} h={6}><polygon points="0,0 11,0 5.5,6" fill="#666" /></G>
        </ScrollButton>
      </ScrollBar>
    </Workspace>

    <StatusBar>
      <StatusText $ml={7} $w={76}>Page 1 of 1</StatusText>
      <StatusText $ml={23} $w={64}>24 words</StatusText>
      <G w={21} h={20} ml={22}>
        {line("M.5 2.5h6l3 2v13l-3-2h-6zM9.5 4.5l3-2M9.5 17.5l3-2", "#666", 1)}
        {line("M14 6l6 7M20 6l-6 7", "#666", 2)}
      </G>
      <G w={20} h={20} ml={1329}>
        {line("M.5 2.5h8l1.5 1.5 1.5-1.5h8v15h-8l-1.5 1.5-1.5-1.5h-8zM10 4v14M3 6h5M3 9h5M3 12h5M3 15h5M12 6h5M12 9h5M12 12h5M12 15h5", "#666", 1)}
      </G>
      <ViewButton $ml={12} $active>
        <G w={20} h={20}>
          <rect x=".5" y=".5" width="19" height="19" fill="none" stroke="#666" />
          {line(lines([4.5, 7.5, 10.5, 13.5, 16], 3, 17), "#666", 1)}
        </G>
      </ViewButton>
      <G w={21} h={21} ml={13}>
        <path d="M.5 .5h13l3 3v6M.5 .5v18h9" fill="none" stroke="#666" />
        {line("M3 5h9M3 8h9M3 11h5M3 14h5", "#666", 1)}
        <circle cx="15" cy="15" r="6" fill="#666" />
        <path d="M12 12h3l1 3-3 2zM16 17h3l-2 2z" fill="#f0f0f0" />
      </G>
      <G w={12} h={4} ml={17}>
        <rect width="12" height="3" fill="#777" />
      </G>
      <G w={148} h={16} ml={6}>
        <rect y="7" width="148" height="2" fill="#a6a6a6" />
        <rect x="71" width="6" height="16" fill="#777" />
      </G>
      <G w={14} h={14} ml={5}>
        <path d="M5.5 0h3v5.5H14v3H8.5V14h-3V8.5H0v-3h5.5z" fill="#777" />
      </G>
      <StatusText $ml={17} $w={42}>100%</StatusText>
    </StatusBar>

    <Taskbar>
      <DimSegment $w={71} $pl={24}>
        <G w={24} h={24}>
          <path d="M0 3.5l10-1.500v9.500H0zM11.500 1.800L24 0v11.500H11.500zM0 12.500h10V22L0 20.500zM11.500 12.500H24V24l-12.500-2z" fill="#fff" />
        </G>
      </DimSegment>
      <SearchBox>
        <G w={35} h={35}>
          <circle cx="17.5" cy="17.5" r="14.5" fill="none" stroke="#fff" strokeWidth="5" />
        </G>
        <SearchText>Type here to search</SearchText>
        <G w={17} h={24}>
          <rect x="4.5" y=".5" width="8" height="15" rx="4" fill="none" stroke="#999" strokeWidth="1.5" />
          {line("M1 10v3a7.5 7.5 0 0 0 15 0v-3M8.5 20v3M4 23.5h9", "#999", 1.5)}
        </G>
      </SearchBox>
      <DimSegment $w={103} $pl={21}>
        <G w={30} h={22}>
          <rect x="6" y=".5" width="18" height="21" fill="none" stroke="#fff" strokeWidth="1.4" />
          {line("M3.5 4H1v14h2.5M26.5 4H29v14h-2.5", "#fff", 1.2)}
        </G>
        <G w={4} h={36} ml={31}>
          {line("M.5 0v36M3.5 0v36", "#555", 1)}
        </G>
      </DimSegment>
      <TaskSlot><EdgeLogo /></TaskSlot>
      <TaskSlot $running><ChromeLogo /></TaskSlot>
      <TaskSlot><FirefoxLogo /></TaskSlot>
      <TaskSlot>
        <MailIcon />
        <TaskBadge>2</TaskBadge>
      </TaskSlot>
      <TaskSlot><StoreIcon /></TaskSlot>
      <TaskSlot><FolderIcon /></TaskSlot>
      <TaskSlot><KrakenIcon /></TaskSlot>
      <TaskSlot><SublimeIcon /></TaskSlot>
      <TaskSlot $running><AtomIcon /></TaskSlot>
      <TaskSlot $running><ClapperIcon /></TaskSlot>
      <TaskSlot $running $active><WordIcon /></TaskSlot>
      <OverflowStrip>
        <G w={13} h={8}>{line("M1 7l5.5-5.5L12 7", "#555", 2.2)}</G>
        <G w={13} h={8}>{line("M1 1l5.5 5.5L12 1", "#555", 2.2)}</G>
      </OverflowStrip>
      <Tray>
        <BatteryMeter>
          <BatteryText>36%</BatteryText>
        </BatteryMeter>
        <G w={18} h={10} ml={40}>
          {line("M0 9.5L9 .5l9 9", "#fff", 1.2)}
        </G>
        <G w={23} h={15} ml={28}>
          <rect x=".5" y=".5" width="20" height="14" fill="none" stroke="#fff" />
          <rect x="3" y="3" width="6" height="9" fill="#fff" />
          <rect x="21" y="5" width="2" height="5" fill="#fff" />
        </G>
        <G w={22} h={20} ml={25}>
          <path d="M.5 6.5h4l6-5v17l-6-5h-4z" fill="none" stroke="#fff" />
          {line("M13 8q1.5 2 0 4", "#fff", 1)}
          {line("M16 5q3 5 0 10M19 2q5 8 0 16", "#777", 1)}
        </G>
        <G w={33} h={20} ml={26}>
          <rect x=".5" y=".5" width="32" height="19" fill="none" stroke="#fff" />
          <path d="M4 5h25M4 9h25" stroke="#fff" strokeDasharray="2 1.5" />
          {line("M4 13h3M9 13h15M26 13h3M4 16h25", "#fff", 1)}
        </G>
        <G w={19} h={18} ml={34}>
          <rect x=".5" y=".5" width="18" height="17" fill="none" stroke="#fff" />
          {line("M1 11.5h17M9.5 11.5V17", "#fff", 1)}
        </G>
        <Clock>
          <span>12:10 PM</span>
          <span>7/24/2017</span>
        </Clock>
        <NotifyArea>
          <G w={24} h={24}>
            <path d="M0 0h24v17H11l-5 6v-6H0z" fill="#fff" />
            {line("M5 5h14M5 9h14M5 13h9", "#000", 1)}
          </G>
          <NotifyBadge>7</NotifyBadge>
        </NotifyArea>
      </Tray>
    </Taskbar>
  </Window>
);

export default App;
